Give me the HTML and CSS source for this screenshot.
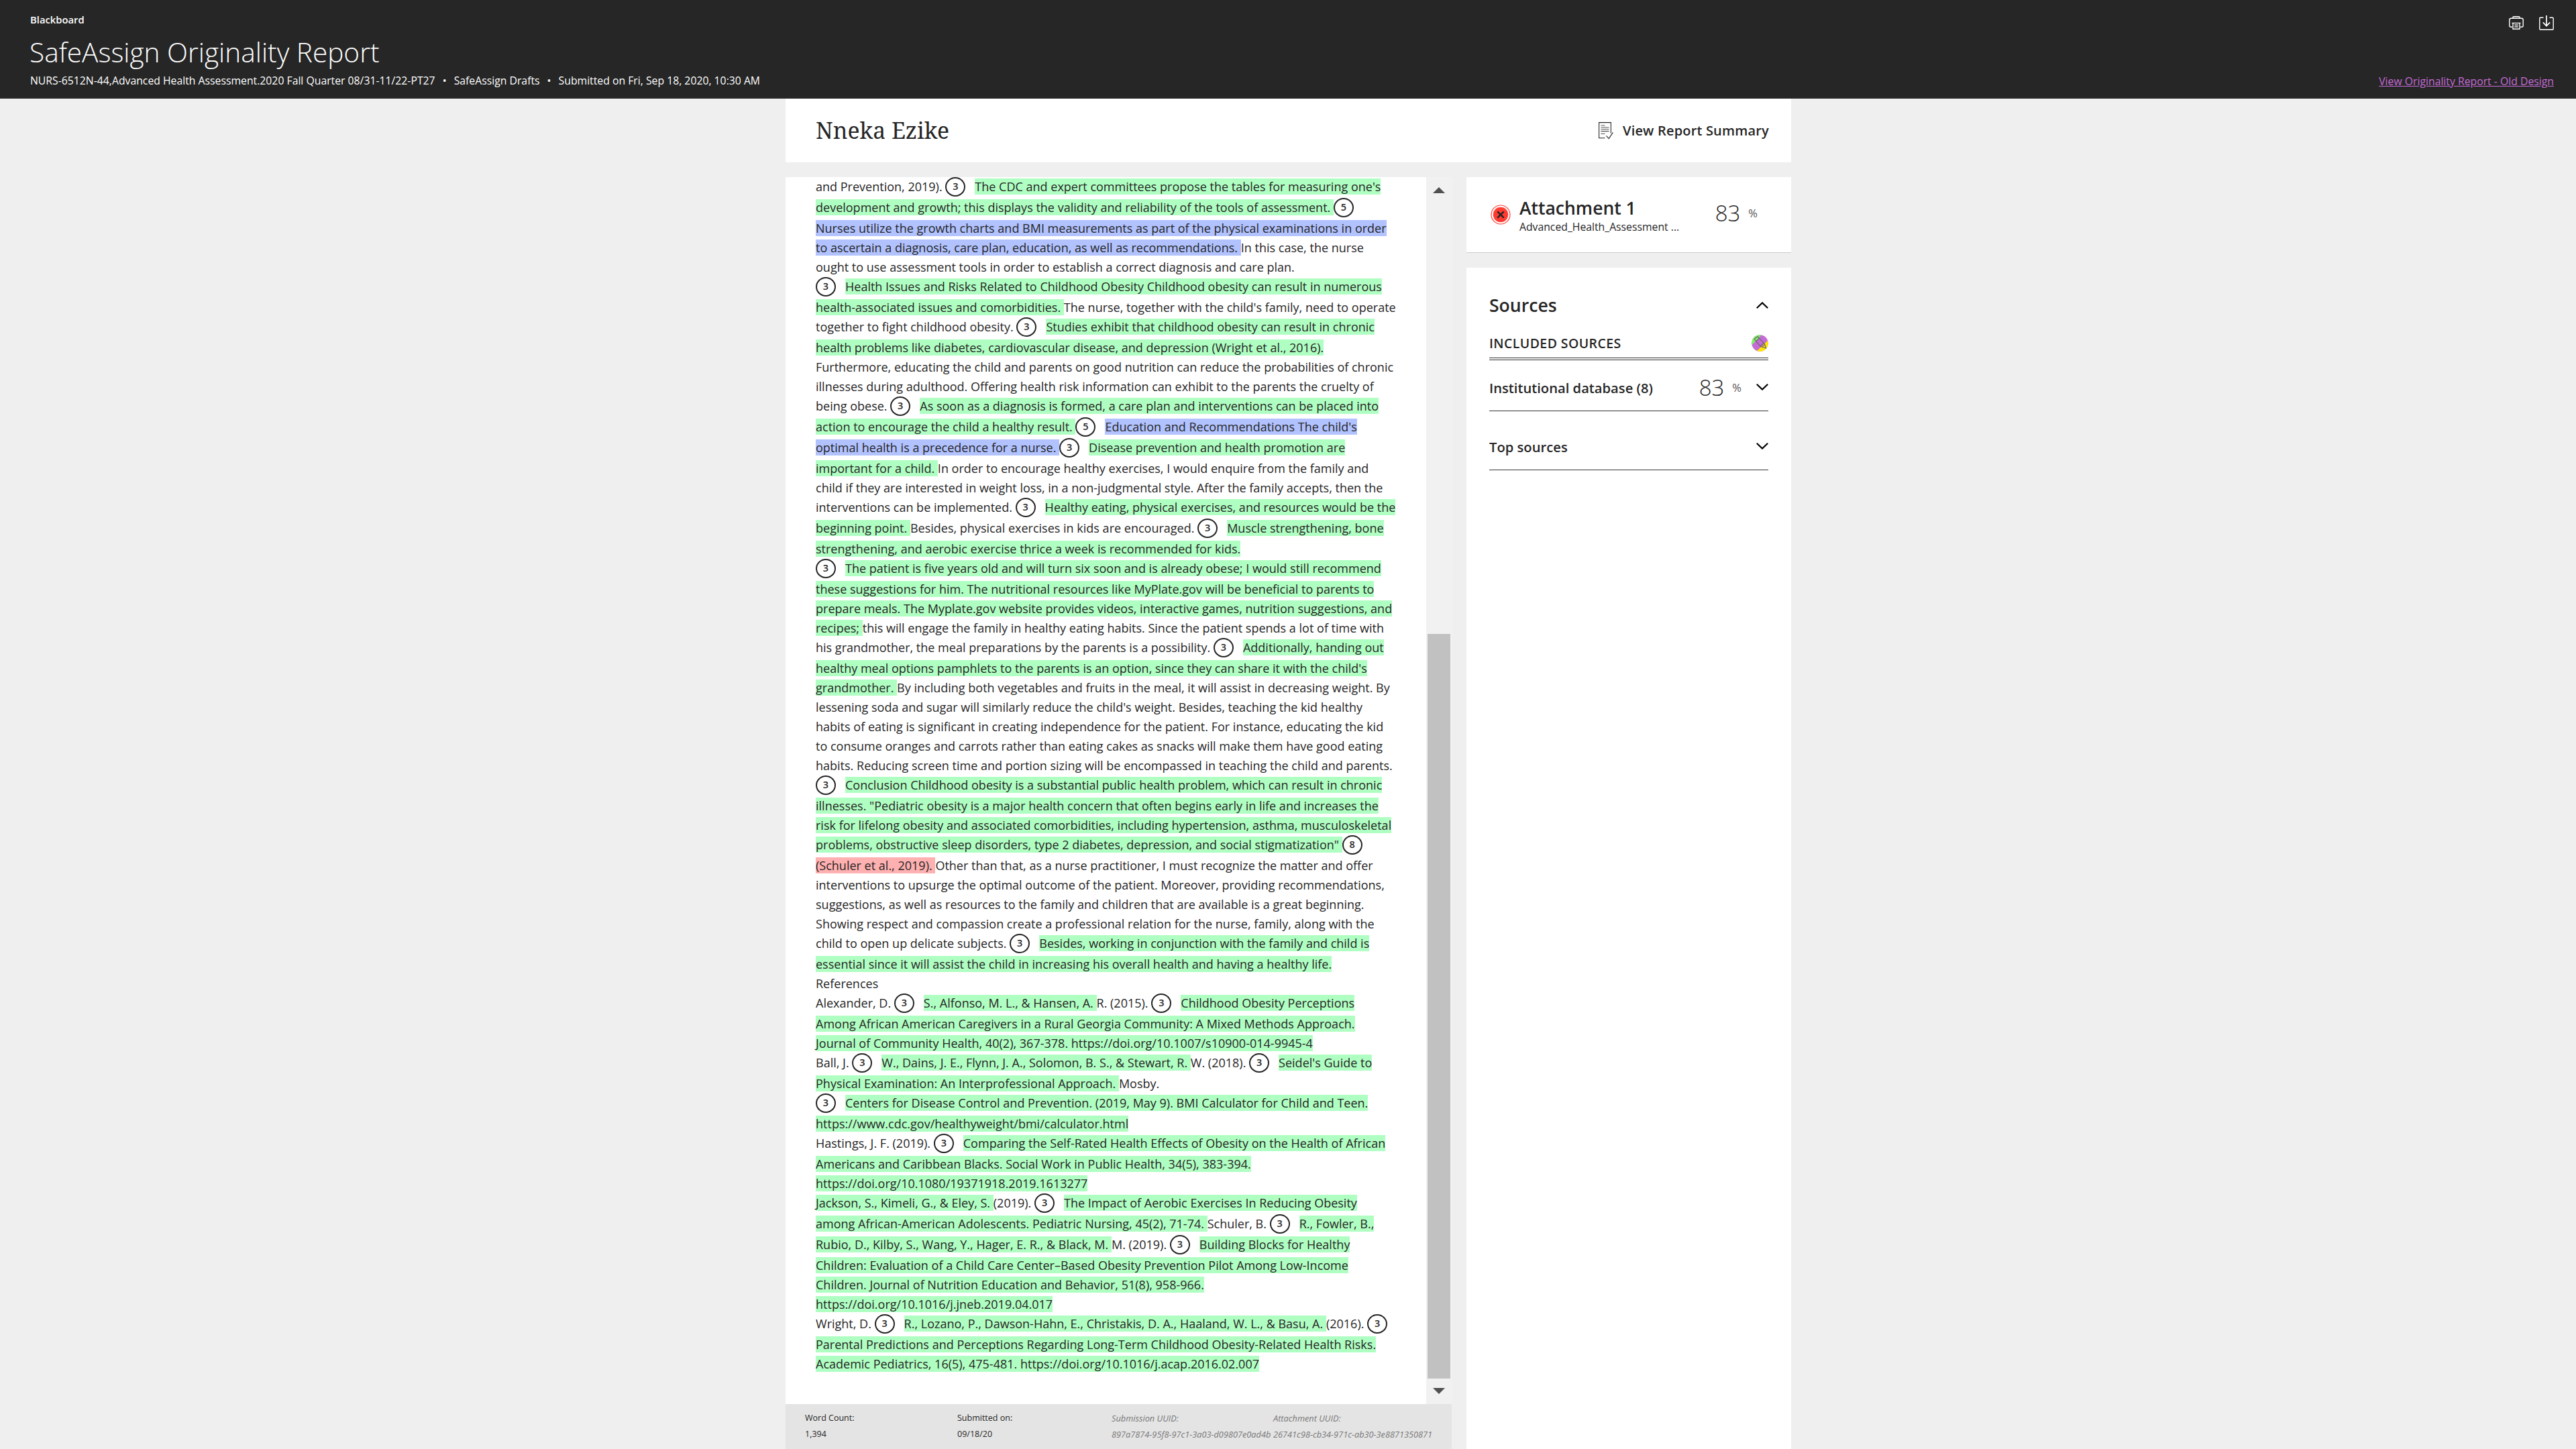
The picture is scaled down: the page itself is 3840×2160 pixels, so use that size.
FILE: index.html
```html
<!DOCTYPE html>
<html lang="en">
<head>
  <meta charset="UTF-8">
  <meta name="viewport" content="width=device-width, initial-scale=1.0">
  <title>SafeAssign Originality Report</title>
  <link rel="stylesheet" href="styles.css">
</head>
<body>
  <header class="top">
    <div class="top-left">
      <div class="brand">Blackboard</div>
      <h1>SafeAssign Originality Report</h1>
      <div class="crumbs"><span>NURS-6512N-44,Advanced Health Assessment.2020 Fall Quarter 08/31-11/22-PT27</span><i>•</i><span>SafeAssign Drafts</span><i>•</i><span>Submitted on Fri, Sep 18, 2020, 10:30 AM</span></div>
    </div>
    <div class="top-right">
      <div class="tools">
        <svg width="22" height="22" viewBox="0 0 22 22" fill="none" stroke="#fff" stroke-width="1.4">
          <path d="M6 4V2.8Q6 1.7 7.1 1.7H14.9Q16 1.7 16 2.8V4"/>
          <path d="M5 17.3H3Q0.8 17.3 0.8 15V6.8Q0.8 4.2 3.4 4.2H18.6Q21.2 4.2 21.2 6.8V15Q21.2 17.3 19 17.3H17"/>
          <path d="M4.5 11.4H17.5M6 11.4V20.2H16V11.4M8.3 14.2H13.7M8.3 17H13.7"/>
        </svg>
        <svg width="22" height="22" viewBox="0 0 22 22" fill="none" stroke="#fff" stroke-width="1.4">
          <path d="M6.5 3.3H2Q0.8 3.3 0.8 4.5V20Q0.8 21.2 2 21.2H20Q21.2 21.2 21.2 20V4.5Q21.2 3.3 20 3.3H15.5"/>
          <path d="M11 0V15.5M5.8 10.4L11 15.7L16.2 10.4" stroke-width="1.7"/>
        </svg>
      </div>
      <a href="#">View Originality Report - Old Design</a>
    </div>
  </header>

  <div class="container">
    <div class="student">
      <h2>Nneka Ezike</h2>
      <div class="summary">
        <svg width="22" height="26" viewBox="0 0 22 26" fill="none" stroke="#262626" stroke-width="1.1">
          <path d="M9.5 23.8H0.6V0.6H18.4V16.5"/>
          <path d="M3.5 5H9.5M3.5 8H15.5M3.5 10.8H15.5M3.5 13.6H15.5M3.5 17.5H9.5" stroke="#555"/>
          <path d="M11.5 20.3L15.3 24.6L21.4 15.4"/>
        </svg>
        <span>View Report Summary</span>
      </div>
    </div>

    <div class="columns">
      <main>
        <div class="viewer">
          <div class="paper">
and Prevention, 2019). <b>3</b><mark>The CDC and expert committees propose the tables for measuring one's</mark><br>
<mark>development and growth; this displays the validity and reliability of the tools of assessment. </mark><b>5</b><br>
<mark class="blue">Nurses utilize the growth charts and BMI measurements as part of the physical examinations in order</mark><br>
<mark class="blue">to ascertain a diagnosis, care plan, education, as well as recommendations. </mark>In this case, the nurse<br>
ought to use assessment tools in order to establish a correct diagnosis and care plan.<br>
<b>3</b><mark>Health Issues and Risks Related to Childhood Obesity Childhood obesity can result in numerous</mark><br>
<mark>health-associated issues and comorbidities. </mark>The nurse, together with the child's family, need to operate<br>
together to fight childhood obesity. <b>3</b><mark>Studies exhibit that childhood obesity can result in chronic</mark><br>
<mark>health problems like diabetes, cardiovascular disease, and depression (Wright et al., 2016).</mark><br>
Furthermore, educating the child and parents on good nutrition can reduce the probabilities of chronic<br>
illnesses during adulthood. Offering health risk information can exhibit to the parents the cruelty of<br>
being obese. <b>3</b><mark>As soon as a diagnosis is formed, a care plan and interventions can be placed into</mark><br>
<mark>action to encourage the child a healthy result. </mark><b>5</b><mark class="blue">Education and Recommendations The child's</mark><br>
<mark class="blue">optimal health is a precedence for a nurse. </mark><b>3</b><mark>Disease prevention and health promotion are</mark><br>
<mark>important for a child. </mark>In order to encourage healthy exercises, I would enquire from the family and<br>
child if they are interested in weight loss, in a non-judgmental style. After the family accepts, then the<br>
interventions can be implemented. <b>3</b><mark>Healthy eating, physical exercises, and resources would be the</mark><br>
<mark>beginning point. </mark>Besides, physical exercises in kids are encouraged. <b>3</b><mark>Muscle strengthening, bone</mark><br>
<mark>strengthening, and aerobic exercise thrice a week is recommended for kids.</mark><br>
<b>3</b><mark>The patient is five years old and will turn six soon and is already obese; I would still recommend</mark><br>
<mark>these suggestions for him. The nutritional resources like MyPlate.gov will be beneficial to parents to</mark><br>
<mark>prepare meals. The Myplate.gov website provides videos, interactive games, nutrition suggestions, and</mark><br>
<mark>recipes; </mark>this will engage the family in healthy eating habits. Since the patient spends a lot of time with<br>
his grandmother, the meal preparations by the parents is a possibility. <b>3</b><mark>Additionally, handing out</mark><br>
<mark>healthy meal options pamphlets to the parents is an option, since they can share it with the child's</mark><br>
<mark>grandmother. </mark>By including both vegetables and fruits in the meal, it will assist in decreasing weight. By<br>
lessening soda and sugar will similarly reduce the child's weight. Besides, teaching the kid healthy<br>
habits of eating is significant in creating independence for the patient. For instance, educating the kid<br>
to consume oranges and carrots rather than eating cakes as snacks will make them have good eating<br>
habits. Reducing screen time and portion sizing will be encompassed in teaching the child and parents.<br>
<b>3</b><mark>Conclusion Childhood obesity is a substantial public health problem, which can result in chronic</mark><br>
<mark>illnesses. "Pediatric obesity is a major health concern that often begins early in life and increases the</mark><br>
<mark>risk for lifelong obesity and associated comorbidities, including hypertension, asthma, musculoskeletal</mark><br>
<mark>problems, obstructive sleep disorders, type 2 diabetes, depression, and social stigmatization" </mark><b>8</b><br>
<mark class="red">(Schuler et al., 2019). </mark>Other than that, as a nurse practitioner, I must recognize the matter and offer<br>
interventions to upsurge the optimal outcome of the patient. Moreover, providing recommendations,<br>
suggestions, as well as resources to the family and children that are available is a great beginning.<br>
Showing respect and compassion create a professional relation for the nurse, family, along with the<br>
child to open up delicate subjects. <b>3</b><mark>Besides, working in conjunction with the family and child is</mark><br>
<mark>essential since it will assist the child in increasing his overall health and having a healthy life.</mark><br>
References<br>
Alexander, D. <b>3</b><mark>S., Alfonso, M. L., &amp; Hansen, A. </mark>R. (2015). <b>3</b><mark>Childhood Obesity Perceptions</mark><br>
<mark>Among African American Caregivers in a Rural Georgia Community: A Mixed Methods Approach.</mark><br>
<mark>Journal of Community Health, 40(2), 367-378. https://doi.org/10.1007/s10900-014-9945-4</mark><br>
Ball, J. <b>3</b><mark>W., Dains, J. E., Flynn, J. A., Solomon, B. S., &amp; Stewart, R. </mark>W. (2018). <b>3</b><mark>Seidel's Guide to</mark><br>
<mark>Physical Examination: An Interprofessional Approach. </mark>Mosby.<br>
<b>3</b><mark>Centers for Disease Control and Prevention. (2019, May 9). BMI Calculator for Child and Teen.</mark><br>
<mark>https://www.cdc.gov/healthyweight/bmi/calculator.html</mark><br>
Hastings, J. F. (2019). <b>3</b><mark>Comparing the Self-Rated Health Effects of Obesity on the Health of African</mark><br>
<mark>Americans and Caribbean Blacks. Social Work in Public Health, 34(5), 383-394.</mark><br>
<mark>https://doi.org/10.1080/19371918.2019.1613277</mark><br>
<mark>Jackson, S., Kimeli, G., &amp; Eley, S. </mark>(2019). <b>3</b><mark>The Impact of Aerobic Exercises In Reducing Obesity</mark><br>
<mark>among African-American Adolescents. Pediatric Nursing, 45(2), 71-74. </mark>Schuler, B. <b>3</b><mark>R., Fowler, B.,</mark><br>
<mark>Rubio, D., Kilby, S., Wang, Y., Hager, E. R., &amp; Black, M. </mark>M. (2019). <b>3</b><mark>Building Blocks for Healthy</mark><br>
<mark>Children: Evaluation of a Child Care Center–Based Obesity Prevention Pilot Among Low-Income</mark><br>
<mark>Children. Journal of Nutrition Education and Behavior, 51(8), 958-966.</mark><br>
<mark>https://doi.org/10.1016/j.jneb.2019.04.017</mark><br>
Wright, D. <b>3</b><mark>R., Lozano, P., Dawson-Hahn, E., Christakis, D. A., Haaland, W. L., &amp; Basu, A. </mark>(2016). <b>3</b><br>
<mark>Parental Predictions and Perceptions Regarding Long-Term Childhood Obesity-Related Health Risks.</mark><br>
<mark>Academic Pediatrics, 16(5), 475-481. https://doi.org/10.1016/j.acap.2016.02.007</mark>
          </div>
          <div class="scrollbar">
            <div class="arrow up"></div>
            <div class="thumb"></div>
            <div class="arrow down"></div>
          </div>
        </div>
        <footer>
          <div>Word Count:<br>1,394</div>
          <div>Submitted on:<br>09/18/20</div>
          <div class="uuid">Submission UUID:<br>897a7874-95f8-97c1-3a03-d09807e0ad4b</div>
          <div class="uuid">Attachment UUID:<br>26741c98-cb34-971c-ab30-3e8871350871</div>
        </footer>
      </main>

      <aside>
        <div class="card attachment">
          <svg width="30" height="30" viewBox="0 0 30 30">
            <circle cx="15" cy="15" r="14" fill="#fff" stroke="#ff3b30" stroke-width="1.2"/>
            <circle cx="15" cy="15" r="11.2" fill="#ff3b30"/>
            <path d="M10.3 10.3L19.7 19.7M19.7 10.3L10.3 19.7" stroke="#262626" stroke-width="2.6"/>
          </svg>
          <div class="file">
            <h3>Attachment 1</h3>
            <p>Advanced_Health_Assessment ...</p>
          </div>
          <div class="score">83<small>%</small></div>
        </div>

        <div class="card sources">
          <div class="row heading">
            <h3>Sources</h3>
            <svg class="chevron" width="18" height="10" viewBox="0 0 18 10"><path d="M0.8 9.2L9 1.4L17.2 9.2"/></svg>
          </div>
          <div class="row included">
            <span>INCLUDED SOURCES</span>
            <svg width="25" height="25" viewBox="0 0 25 25">
              <clipPath id="disc"><circle cx="12.5" cy="12.5" r="12.3"/></clipPath>
              <g clip-path="url(#disc)">
                <rect width="25" height="25" fill="#c56bd6"/>
                <path d="M0 0H15L0 16Z" fill="#7cf562"/>
                <path d="M25 8V25H7Z" fill="#ffe600"/>
              </g>
              <g fill="none" stroke="#666" stroke-width="1.1">
                <path d="M4 6.5L9 2.5L18.5 12.5L13 17Z"/>
                <path d="M6.8 9.4L11.8 5.4M13 17L15.5 18.2L19.8 14.6L18.5 12.5M15.5 18.2L21.5 20L19.8 14.6"/>
              </g>
            </svg>
          </div>
          <div class="row database">
            <span>Institutional database (8)</span>
            <div class="score">83<small>%</small></div>
            <svg class="chevron" width="18" height="10" viewBox="0 0 18 10"><path d="M0.8 0.8L9 8.6L17.2 0.8"/></svg>
          </div>
          <div class="row topsources">
            <span>Top sources</span>
            <svg class="chevron" width="18" height="10" viewBox="0 0 18 10"><path d="M0.8 0.8L9 8.6L17.2 0.8"/></svg>
          </div>
        </div>
      </aside>
    </div>
  </div>
</body>
</html>
```
FILE: styles.css
```css
* {
  box-sizing: border-box;
}
body {
  margin: 0;
  height: 2160px;
  overflow: hidden;
  display: flex;
  flex-direction: column;
  background-color: #efefef;
  color: #262626;
  font-family: "Open Sans", sans-serif;
}
h1, h2, h3, p {
  margin: 0;
}
svg {
  display: block;
  flex: none;
}

/* header */
.top {
  height: 147px;
  padding: 19px 33px 0 45px;
  display: flex;
  justify-content: space-between;
  background-color: #262626;
  color: #fff;
}
.brand {
  font-size: 14.8px;
  font-weight: 600;
  line-height: 20px;
}
h1 {
  margin: 15px 0 8px -1px;
  font-size: 40.6px;
  font-weight: 300;
  line-height: 48px;
}
.crumbs {
  display: flex;
  font-size: 15.77px;
  line-height: 20px;
}
.crumbs i {
  width: 28px;
  text-align: center;
  font-style: normal;
}
.top-right {
  display: flex;
  flex-direction: column;
  align-items: flex-end;
  padding-top: 4px;
}
.tools {
  display: flex;
  gap: 23px;
  margin-bottom: 66px;
}
.top-right a {
  font-size: 15.77px;
  line-height: 20px;
  color: #c56bd6;
}

/* page */
.container {
  width: 1500px;
  margin: 0 auto;
  padding-left: 1px;
  flex: 1;
  display: flex;
  flex-direction: column;
}
.student {
  height: 95px;
  padding: 0 33px 0 45px;
  display: flex;
  justify-content: space-between;
  align-items: center;
  background-color: #fff;
}
h2 {
  padding-bottom: 2px;
  font-family: "Noto Serif", "DejaVu Serif", serif;
  font-size: 33.7px;
  font-weight: 400;
}
.summary {
  display: flex;
  align-items: center;
  gap: 14px;
  font-size: 20px;
  font-weight: 600;
  letter-spacing: 0.18px;
}
.columns {
  flex: 1;
  display: flex;
  gap: 21px;
  padding-top: 22px;
}
main {
  width: 994px;
}

/* submitted text */
.viewer {
  height: 1829px;
  display: flex;
}
.paper {
  width: 955px;
  padding-left: 45px;
  background-color: #fff;
  font-size: 18px;
  line-height: 29px;
  letter-spacing: 0.005px;
  white-space: nowrap;
}
mark {
  color: inherit;
  background-color: #b0ffc2;
  white-space: pre;
}
.blue {
  background-color: #b1c2ff;
}
.red {
  background-color: #ffb0b0;
}
.paper b {
  display: inline-block;
  width: 30px;
  height: 29px;
  margin: 0 14px 2px 0;
  border: 2px solid #262626;
  border-radius: 50%;
  vertical-align: top;
  text-align: center;
  font-size: 14.5px;
  font-weight: 600;
  line-height: 24px;
}
.scrollbar {
  width: 39px;
  padding: 15px 3px 0 2px;
  background-color: #f1f1f1;
}
.thumb {
  height: 1110px;
  margin: 657px 0 14px;
  background-color: #c1c1c1;
}
.arrow {
  width: 18px;
  height: 9px;
  margin-left: 8px;
  background-color: #505050;
}
.up {
  clip-path: polygon(50% 0, 100% 100%, 0 100%);
}
.down {
  clip-path: polygon(0 0, 100% 0, 50% 100%);
}
footer {
  width: 993px;
  height: 67px;
  padding: 9px 0 0 29px;
  display: grid;
  grid-template-columns: 227px 230px 241px 1fr;
  background-color: #e4e4e4;
  font-size: 12.5px;
  line-height: 24px;
  white-space: nowrap;
}
.uuid {
  color: #777;
  font-size: 12.75px;
  font-style: italic;
}

/* sidebar */
aside {
  width: 484px;
  display: flex;
  flex-direction: column;
  gap: 22px;
}
.card {
  background-color: #fff;
}
.attachment {
  height: 113px;
  padding: 0 50px 0 36px;
  display: flex;
  align-items: center;
  border-bottom: 1px solid #ccc;
}
.attachment h3 {
  font-size: 26.5px;
  font-weight: 600;
  line-height: 32px;
}
.file {
  margin-left: 13px;
  padding-top: 3px;
}
.file p {
  font-size: 15.75px;
  line-height: 24px;
}
.score {
  margin-left: auto;
  display: flex;
  align-items: center;
  gap: 12px;
  font-size: 33px;
  font-weight: 300;
  line-height: 40px;
}
.score small {
  font-size: 16.5px;
  font-weight: 400;
  color: #555;
}
.attachment .score {
  margin-bottom: 5px;
}
.sources {
  flex: 1;
  padding: 30px 34px 0;
}
.row {
  display: flex;
  align-items: center;
  justify-content: space-between;
  font-size: 20.2px;
  font-weight: 600;
}
.heading {
  height: 52px;
}
.heading h3 {
  font-size: 26.6px;
  font-weight: 600;
}
.chevron {
  fill: none;
  stroke: #000;
  stroke-width: 2.2;
}
.included {
  height: 56px;
  padding-top: 9px;
  border-bottom: 4px double #333;
  font-size: 19.5px;
  letter-spacing: 0.4px;
}
.database {
  height: 76px;
  padding-top: 7px;
  border-bottom: 1px solid #333;
}
.database .score {
  margin-right: 22px;
}
.database .chevron, .topsources .chevron {
  margin-bottom: 3px;
}
.topsources {
  height: 88px;
  padding-top: 19px;
  border-bottom: 1px solid #333;
}
```
